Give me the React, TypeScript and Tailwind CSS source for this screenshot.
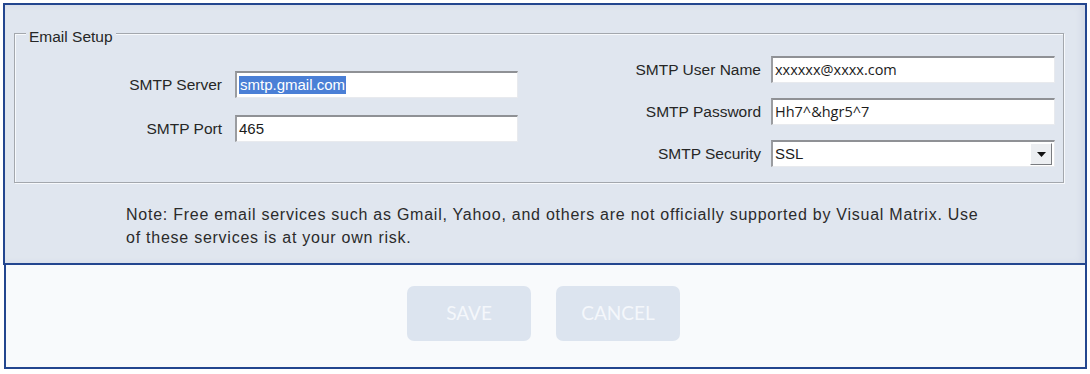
import React from "react";

const sans = { fontFamily: '"Liberation Sans", Arial, sans-serif' };

function Field({ children, w, mono }: { children?: React.ReactNode; w: string; mono?: boolean }) {
  return (
    <div
      className={`${w} h-[27px] bg-white border-t-2 border-l-2 border-t-[#8f9195] border-l-[#9a9ca0] border-r border-b border-r-[#e8eaee] border-b-[#e8eaee] flex items-center pl-[2px] text-[15px] text-[#1b1b1b]`}
      style={mono ? { fontFamily: '"Open Sans", "Liberation Sans", sans-serif' } : sans}
    >
      {children}
    </div>
  );
}

export default function App() {
  return (
    <div className="w-[1090px] h-[374px] bg-white overflow-hidden" style={sans}>
      {/* top panel */}
      <div className="ml-[3px] mt-[3px] w-[1084px] h-[262px] border-2 border-[#23468f] bg-[#e0e6ef] pl-[9px] pt-[28px] shadow-[inset_-4px_0_6px_#d3dae6]">
        {/* group box */}
        <div className="relative w-[1050px] h-[150px] border border-[#a3a7ad] shadow-[inset_1px_1px_0_#f7f9fc,1px_1px_0_#f7f9fc] flex">
          <div className="absolute left-[11px] top-[-6px] px-[3px] bg-[#e0e6ef] text-[15.5px] leading-[18px] text-[#262626]">
            Email Setup
          </div>
          {/* left column */}
          <div className="mt-[37px] grid grid-cols-[207px_283px] gap-x-[13px] gap-y-[17px] items-center h-fit">
            <div className="text-right text-[15.5px] text-[#262626]">SMTP Server</div>
            <Field w="w-[283px]">
              <span className="bg-[#4a7fd6] text-white leading-[18px] px-[1px]">smtp.gmail.com</span>
            </Field>
            <div className="text-right text-[15.5px] text-[#262626]">SMTP Port</div>
            <Field w="w-[283px]">465</Field>
          </div>
          {/* right column */}
          <div className="mt-[22px] grid grid-cols-[243px_284px] gap-x-[10px] gap-y-[15px] items-center h-fit">
            <div className="text-right text-[15.5px] text-[#262626]">SMTP User Name</div>
            <Field w="w-[284px]" mono>
              <span className="text-[14.5px]">xxxxxx@xxxx.com</span>
            </Field>
            <div className="text-right text-[15.5px] text-[#262626]">SMTP Password</div>
            <Field w="w-[284px]" mono>
              <span className="text-[14.5px]">Hh7^&amp;hgr5^7</span>
            </Field>
            <div className="text-right text-[15.5px] text-[#262626]">SMTP Security</div>
            <div className="w-[284px] h-[27px] bg-white border-t-2 border-l-2 border-t-[#8f9195] border-l-[#9a9ca0] border-r border-b border-r-[#e8eaee] border-b-[#e8eaee] flex items-center justify-between pl-[2px] pr-[2px]">
              <span className="text-[15px] text-[#1b1b1b]">SSL</span>
              <div className="w-[22px] h-[22px] bg-[#eceef1] border border-t-white border-l-white border-r-[#7a7c80] border-b-[#7a7c80] flex items-center justify-center">
                <svg width="9" height="5" viewBox="0 0 9 5">
                  <polygon points="0,0 9,0 4.5,5" fill="#111" />
                </svg>
              </div>
            </div>
          </div>
        </div>
        {/* note */}
        <div className="ml-[112px] mt-[20px] text-[16px] tracking-[0.75px] leading-[23px] text-[#2b2b2b] w-[900px]">
          Note: Free email services such as Gmail, Yahoo, and others are not officially supported by Visual Matrix. Use
          <br />
          of these services is at your own risk.
        </div>
      </div>
      {/* bottom area */}
      <div className="ml-[4px] w-[1083px] h-[104px] border-x-2 border-b-2 border-[#23468f] bg-[#f8fafc] flex gap-[25px] pl-[401px] pt-[21px]">
        <div
          className="w-[124px] h-[55px] rounded-[7px] bg-[#dce4ef] flex items-center justify-center text-[19px] text-[#f4f7fb]"
          style={{ fontFamily: "Lato, sans-serif" }}
        >
          SAVE
        </div>
        <div
          className="w-[124px] h-[55px] rounded-[7px] bg-[#dce4ef] flex items-center justify-center text-[19px] text-[#f4f7fb]"
          style={{ fontFamily: "Lato, sans-serif" }}
        >
          CANCEL
        </div>
      </div>
    </div>
  );
}
